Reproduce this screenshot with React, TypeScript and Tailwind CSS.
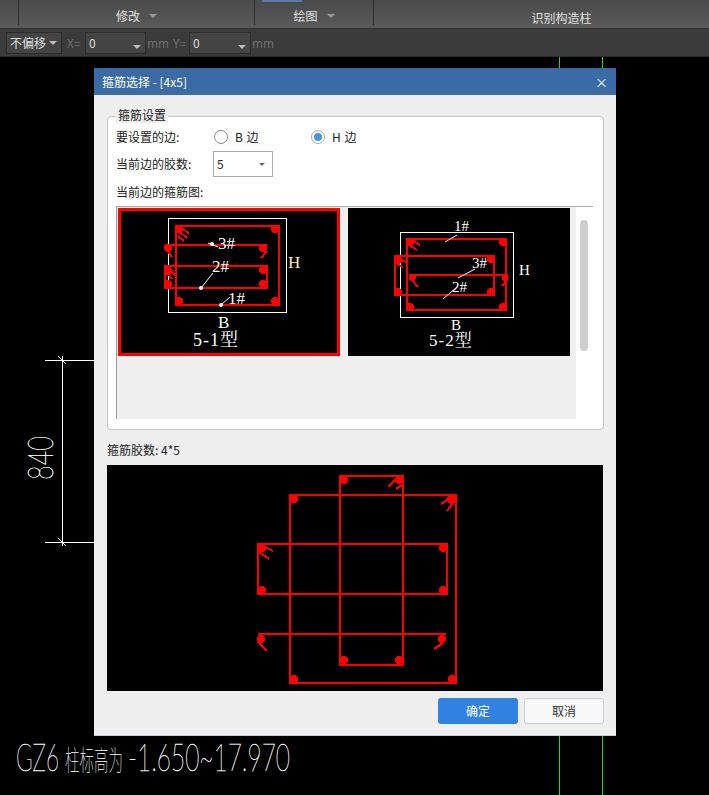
const cjk = { fontFamily: '"Noto Sans CJK SC", "Noto Sans", sans-serif' };
const serif = '"Liberation Serif", "Noto Serif CJK SC", "Noto Sans CJK SC", serif';

type Seg = [number, number, number, number];
type Dot = [number, number, number?];

function Bars({ segs, dots, width = 2 }: { segs: Seg[]; dots: Dot[]; width?: number }) {
  return (
    <g shapeRendering="crispEdges">
      {segs.map((s, i) => (
        <line key={i} x1={s[0]} y1={s[1]} x2={s[2]} y2={s[3]} stroke="#ff0000" strokeWidth={width} />
      ))}
      {dots.map((d, i) => (
        <circle key={i} cx={d[0]} cy={d[1]} r={d[2] ?? 4} fill="#ff0000" />
      ))}
    </g>
  );
}

function Leader({ x1, y1, x2, y2 }: { x1: number; y1: number; x2: number; y2: number }) {
  return <line x1={x1} y1={y1} x2={x2} y2={y2} stroke="#ffffff" strokeWidth={1} />;
}

function Label({ x, y, size, fill = "#ffffff", spacing = 0, children }: { x: number; y: number; size: number; fill?: string; spacing?: number; children: string }) {
  return (
    <text x={x} y={y} fontSize={size} fill={fill} fontFamily={serif} letterSpacing={spacing}>
      {children}
    </text>
  );
}

function Rect({ x1, y1, x2, y2, width = 2 }: { x1: number; y1: number; x2: number; y2: number; width?: number }) {
  return <rect x={x1} y={y1} width={x2 - x1} height={y2 - y1} fill="none" stroke="#ff0000" strokeWidth={width} shapeRendering="crispEdges" />;
}

function Type1() {
  return (
    <svg className="block w-full h-full" viewBox="121 211 216 142">
      <rect x={168.5} y={218.5} width={118} height={94} fill="none" stroke="#ffffff" strokeWidth={1} shapeRendering="crispEdges" />
      <Rect x1={176} y1={226} x2={279} y2={305} />
      <Rect x1={165} y1={266} x2={267} y2={288} />
      <Bars
        segs={[
          [165, 245, 267, 245],
          [165, 245, 165, 250],
          [182, 228, 189, 234],
          [180, 232, 187, 238],
          [178, 236, 184, 241],
          [167, 250, 172, 257],
          [261, 258, 267, 251],
          [170, 268, 175, 276],
          [166, 272, 172, 279],
        ]}
        dots={[
          [179, 229],
          [275, 229],
          [179, 301],
          [275, 301],
          [168, 248],
          [263, 248],
          [168, 271],
          [263, 270],
          [168, 284],
          [263, 284],
        ]}
      />
      <Leader x1={208} y1={243} x2={218} y2={247} />
      <Leader x1={201} y1={288} x2={213} y2={273} />
      <Leader x1={221} y1={305} x2={230} y2={297} />
      <circle cx={212} cy={244} r={2} fill="#ffffff" />
      <circle cx={201} cy={288} r={2} fill="#ffffff" />
      <circle cx={221} cy={305} r={2} fill="#ffffff" />
      <Label x={218} y={249} size={17}>3#</Label>
      <Label x={212} y={272} size={17}>2#</Label>
      <Label x={228} y={304} size={17}>1#</Label>
      <Label x={288} y={268} size={17} fill="#ffe8b0">H</Label>
      <Label x={218} y={328} size={17}>B</Label>
      <Label x={193} y={346} size={18} spacing={1}>5-1型</Label>
    </svg>
  );
}

function Type2() {
  return (
    <svg className="block w-full h-full" viewBox="348 208 222 148">
      <rect x={400.5} y={232.5} width={113} height={85} fill="none" stroke="#ffffff" strokeWidth={1} shapeRendering="crispEdges" />
      <Rect x1={407} y1={239} x2={506} y2={310} />
      <Rect x1={395} y1={256} x2={494} y2={295} />
      <Bars
        segs={[
          [410, 275, 508, 275],
          [410, 275, 410, 280],
          [412, 240, 420, 245],
          [409, 245, 417, 250],
          [397, 258, 406, 262],
          [397, 264, 403, 267],
          [412, 280, 418, 287],
          [507, 280, 502, 286],
        ]}
        dots={[
          [410, 242],
          [503, 242],
          [410, 307],
          [503, 307],
          [398, 260],
          [491, 259],
          [398, 292],
          [491, 292],
          [413, 277, 3],
          [505, 278, 3],
        ]}
      />
      <Leader x1={445} y1={242} x2={457} y2={235} />
      <Leader x1={458} y1={278} x2={475} y2={269} />
      <Leader x1={443} y1={299} x2={457} y2={287} />
      <Label x={454} y={231} size={15}>1#</Label>
      <Label x={472} y={268} size={15}>3#</Label>
      <Label x={452} y={292} size={15}>2#</Label>
      <Label x={519} y={275} size={15}>H</Label>
      <Label x={451} y={330} size={15}>B</Label>
      <Label x={429} y={346} size={17} spacing={1}>5-2型</Label>
    </svg>
  );
}

function Preview() {
  return (
    <svg className="block w-full h-full" viewBox="107 465 496 226">
      <Rect x1={290} y1={495} x2={456} y2={683} />
      <Rect x1={340} y1={476} x2={403} y2={665} />
      <Rect x1={258} y1={544} x2={447} y2={594} />
      <Bars
        segs={[
          [258, 634, 446, 634],
          [452, 497, 441, 504],
          [454, 502, 447, 511],
          [397, 478, 388, 487],
          [402, 485, 396, 489],
          [263, 546, 273, 551],
          [259, 552, 269, 559],
          [258, 642, 267, 651],
          [443, 643, 434, 649],
        ]}
        dots={[
          [294, 499],
          [452, 499, 5],
          [294, 679],
          [452, 679],
          [344, 480],
          [399, 480],
          [344, 660],
          [399, 660],
          [262, 548],
          [443, 548],
          [262, 590],
          [443, 590],
          [261, 639],
          [442, 639],
        ]}
      />
    </svg>
  );
}

function Radio({ label, checked, className }: { label: string; checked?: boolean; className: string }) {
  return (
    <div className={`flex items-center ${className}`}>
      <span className={`w-[14px] h-[14px] rounded-full border flex items-center justify-center bg-white ${checked ? "border-[#a9a9a9]" : "border-[#8c8c8c]"}`}>
        {checked && <span className="w-2 h-2 rounded-full bg-[#4d90e8]" />}
      </span>
      <span className="ml-[7px] text-[12px] text-[#222] tracking-[0.5px]">{label}</span>
    </div>
  );
}

function Caret({ className = "border-t-[#9a9a9a]" }: { className?: string }) {
  return <span className={`inline-block w-0 h-0 border-x-[4px] border-x-transparent border-t-[4px] ${className}`} />;
}

function Dialog() {
  return (
    <div className="absolute left-[94px] top-[68px] w-[522px] h-[668px] bg-[#eeeeee] border-b border-[#c5cdd8] flex flex-col">
      <div className="h-[27px] bg-[#3a6ba5] flex items-center justify-between pl-[8px] pr-[8px] text-white text-[12px]">
        <span>箍筋选择 - [4x5]</span>
        <span className="text-[13px] leading-none">×</span>
      </div>

      <div className="flex-1 flex flex-col pl-[13px] pr-[12px]">
        <div className="relative mt-[21px] h-[314px] bg-white border border-[#c4c4c4] rounded-[4px] flex flex-col">
          <span className="absolute left-[8px] -top-[10px] px-[2px] bg-[#eeeeee] text-[12px] leading-[16px] text-[#222]">箍筋设置</span>

          <div className="mt-[10px] h-[20px] pl-[8px] flex items-center text-[12px] text-[#222]">
            <span className="w-[98px]">要设置的边:</span>
            <Radio label="B 边" className="w-[97px]" />
            <Radio label="H 边" checked className="" />
          </div>

          <div className="mt-[4px] h-[26px] pl-[8px] flex items-center text-[12px] text-[#222]">
            <span className="w-[97px]">当前边的胶数:</span>
            <div className="w-[60px] h-[26px] border border-[#ababab] bg-white flex items-center justify-between pl-[3px] pr-[7px]">
              <span>5</span>
              <span className="inline-block w-0 h-0 border-x-[3px] border-x-transparent border-t-[3px] border-t-[#666]" />
            </div>
          </div>

          <div className="mt-[7px] h-[16px] pl-[8px] flex items-center text-[12px] text-[#222]">当前边的箍筋图:</div>

          <div className="mt-[6px] ml-[8px] w-[477px] h-[213px] border-t border-[#ababab] flex">
            <div className="w-[460px] h-[212px] bg-[#efefef] border-l border-[#9a9a9a] pl-[1px] pt-[1px] flex items-start gap-2">
              <div className="w-[222px] h-[148px] bg-black border-[3px] border-[#ff0000]">
                <Type1 />
              </div>
              <div className="w-[222px] h-[148px] bg-black">
                <Type2 />
              </div>
            </div>
            <div className="ml-[4px] mt-[13px] w-2 h-[131px] rounded-full bg-[#cdcdcd]" />
          </div>
        </div>

        <div className="mt-[12px] h-[16px] flex items-center text-[12px] text-[#222]">箍筋胶数: 4*5</div>

        <div className="mt-[7px] w-[496px] h-[226px] bg-black">
          <Preview />
        </div>

        <div className="mt-[7px] flex justify-end gap-[6px]">
          <div className="w-[80px] h-[26px] rounded-[3px] bg-[#3182e0] text-white text-[12px] flex items-center justify-center">确定</div>
          <div className="w-[80px] h-[26px] rounded-[3px] bg-[#f8f8f8] border border-[#c5cdd8] text-[#333] text-[12px] flex items-center justify-center">取消</div>
        </div>
      </div>
    </div>
  );
}

function CadText({ x, length, size, bold = 0.4, children }: { x: number; length: number; size: number; bold?: number; children: string }) {
  return (
    <text
      x={x}
      y={771}
      fontSize={size}
      fontWeight={100}
      fontFamily='Lato, "Noto Sans CJK SC", sans-serif'
      textLength={length}
      lengthAdjust="spacingAndGlyphs"
      fill="#ffffff"
      stroke="#ffffff"
      strokeWidth={bold}
    >
      {children}
    </text>
  );
}

function Canvas() {
  return (
    <svg className="absolute inset-0 w-full h-full" viewBox="0 0 709 795">
      <line x1={559.5} y1={57} x2={559.5} y2={795} stroke="#1fdc1f" strokeWidth={1} />
      <line x1={602.5} y1={57} x2={602.5} y2={795} stroke="#1fdc1f" strokeWidth={1} />
      <g stroke="#ffffff" strokeWidth={1} shapeRendering="crispEdges">
        <line x1={45} y1={360.5} x2={94} y2={360.5} />
        <line x1={45} y1={542.5} x2={94} y2={542.5} />
        <line x1={62.5} y1={356} x2={62.5} y2={546} />
        <line x1={58} y1={356} x2={66} y2={364} />
        <line x1={58} y1={538} x2={66} y2={546} />
      </g>
      <text
        transform="translate(53 480) rotate(-90)"
        fontSize={36}
        fontWeight={100}
        fontFamily="Lato, sans-serif"
        textLength={44}
        lengthAdjust="spacingAndGlyphs"
        fill="#ffffff"
        stroke="#ffffff"
        strokeWidth={0.4}
      >
        840
      </text>
      <CadText x={16} length={43} size={38}>GZ6</CadText>
      <CadText x={65} length={58} size={28} bold={0}>柱标高为</CadText>
      <CadText x={128} length={162} size={38}>-1.650~17.970</CadText>
    </svg>
  );
}

export default function App() {
  return (
    <div className="relative w-[709px] h-[795px] overflow-hidden bg-black" style={cjk}>
      <Canvas />

      <div className="relative h-[29px] bg-gradient-to-b from-[#4a4a4a] to-[#5a5a5a] border-b border-[#333] flex text-[12px] text-[#e0e0e0]">
        <div className="w-[19px] h-[25px] border-r border-[#2e2e2e]" />
        <div className="relative w-[236px] h-[25px] pt-[6px] border-r border-[#2e2e2e] flex items-center justify-center gap-[9px]">
          <span>修改</span>
          <Caret />
        </div>
        <div className="relative w-[119px] h-[25px] pt-[6px] border-r border-[#2e2e2e] flex items-center justify-center gap-[9px]">
          <span>绘图</span>
          <Caret />
        </div>
        <div className="flex-1 pt-[8px] pl-[40px] flex items-center justify-center">识别构造柱</div>
        <div className="absolute left-[262px] top-0 w-[40px] h-[2px] bg-[#5b7cab]" />
      </div>

      <div className="relative h-[28px] bg-[#3b3b3b] border-b border-[#2c2c2c] flex items-center pl-[6px] text-[12px] text-[#6e6e6e]">
        <div className="w-[56px] h-[22px] bg-[#444] border border-[#2b2b2b] flex items-center justify-between pl-[3px] pr-[4px] text-[#dddddd]">
          <span>不偏移</span>
          <Caret className="border-t-[#bbbbbb]" />
        </div>
        <span className="ml-[5px] w-[18px]">X=</span>
        <div className="w-[61px] h-[22px] bg-[#444] border border-[#2b2b2b] flex items-center justify-between pl-[3px] pr-[4px] text-[#dddddd]">
          <span>0</span>
          <Caret className="border-t-[#bbbbbb] mt-[8px]" />
        </div>
        <span className="w-[27px] pl-[1px]">mm</span>
        <span className="w-[16px]">Y=</span>
        <div className="w-[62px] h-[22px] bg-[#444] border border-[#2b2b2b] flex items-center justify-between pl-[3px] pr-[4px] text-[#dddddd]">
          <span>0</span>
          <Caret className="border-t-[#bbbbbb] mt-[8px]" />
        </div>
        <span className="pl-[1px]">mm</span>
      </div>

      <Dialog />
    </div>
  );
}
